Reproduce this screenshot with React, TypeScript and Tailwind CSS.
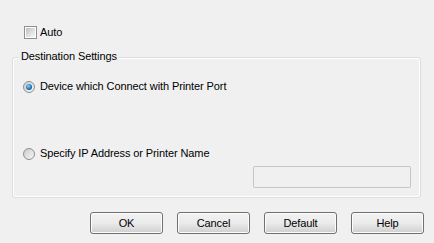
import React from 'react';

// Win7-style printer destination dialog

function CheckBox() {
    return (
        <div className="w-[13px] h-[13px] border border-[#8e8f8f] bg-white p-[1px]">
            <div className="w-full h-full bg-gradient-to-br from-[#b9bdc2] via-[#dcdee0] to-[#f8f8f8]" />
        </div>
    );
}

function Radio({ checked }: { checked: boolean }) {
    return (
        <div className="w-[12px] h-[12px] rounded-full border border-[#8e8f8f] bg-gradient-to-br from-[#c9ccd0] to-[#f6f6f6] flex items-center justify-center">
            {checked && (
                <div className="w-[6px] h-[6px] rounded-full bg-[radial-gradient(circle_at_40%_35%,#8fd2f7,#1a6fb0_60%,#0d3f73)]" />
            )}
        </div>
    );
}

function Button({ label }: { label: string }) {
    return (
        <div className="w-[73px] h-[22px] rounded-[3px] border border-[#707070] bg-gradient-to-b from-[#f2f2f2] via-[#ebebeb] to-[#cfcfcf] shadow-[inset_0_0_0_1px_#fcfcfc] flex items-center justify-center text-[11px] text-black">
            {label}
        </div>
    );
}

export default function App() {
    return (
        <div
            className="w-[434px] h-[243px] bg-[#f0f0f0] text-black text-[11px] leading-[13px] overflow-hidden tracking-[-0.1px]"
            style={{ fontFamily: "'Liberation Sans', Arial, sans-serif" }}
        >
            {/* auto checkbox */}
            <div className="flex items-center gap-[3px] pt-[26px] pl-[24px]">
                <CheckBox />
                <span>Auto</span>
            </div>

            {/* group box */}
            <div className="relative ml-[12px] mt-[18px] w-[409px] h-[141px] rounded-[3px] border border-[#d5dfe5] shadow-[inset_0_0_0_1px_#ffffff]">
                <span className="absolute -top-[8px] left-[6px] px-[2px] bg-[#f0f0f0]">Destination Settings</span>

                <div className="flex items-center gap-[5px] pl-[10px] pt-[22px]">
                    <Radio checked={true} />
                    <span>Device which Connect with Printer Port</span>
                </div>

                <div className="flex items-center gap-[5px] pl-[10px] pt-[54px]">
                    <Radio checked={false} />
                    <span>Specify IP Address or Printer Name</span>
                </div>

                <div className="flex justify-end pr-[9px] pt-[6px]">
                    <div className="w-[158px] h-[22px] rounded-[2px] border border-[#c4c6ca] bg-[#f0f0f0]" />
                </div>
            </div>

            {/* buttons */}
            <div className="flex gap-[14px] pl-[90px] pt-[14px]">
                <Button label="OK" />
                <Button label="Cancel" />
                <Button label="Default" />
                <Button label="Help" />
            </div>
        </div>
    );
}
